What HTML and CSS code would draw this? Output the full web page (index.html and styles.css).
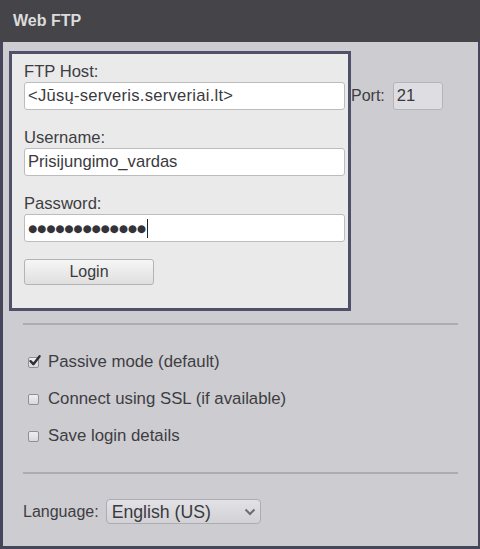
FILE: index.html
```html
<!DOCTYPE html>
<html lang="lt">
<head>
<meta charset="utf-8">
<title>Web FTP</title>
<link rel="stylesheet" href="styles.css">
</head>
<body>
<div class="window">
  <div class="titlebar">Web FTP</div>
  <div class="content">
    <div class="main-row">
      <form class="login-box">
        <div class="field">
          <label class="label" for="host">FTP Host:</label>
          <input class="input host" id="host" type="text" value="&lt;Jūsų-serveris.serveriai.lt&gt;">
        </div>
        <div class="field">
          <label class="label" for="user">Username:</label>
          <input class="input" id="user" type="text" value="Prisijungimo_vardas">
        </div>
        <div class="field">
          <label class="label">Password:</label>
          <div class="input password"><span class="dots">●●●●●●●●●●●●●</span><span class="caret"></span></div>
        </div>
        <button class="btn" type="button">Login</button>
      </form>
      <div class="port">
        <label class="port-label" for="port">Port:</label>
        <input class="port-input" id="port" type="text" value="21">
      </div>
    </div>
    <div class="divider"></div>
    <div class="options">
      <div class="option">
        <span class="check checked"><svg viewBox="0 0 14 14" width="14" height="14"><path d="M2.5 7.2 L5.4 10.2 L11.6 2.2" fill="none" stroke="#2f2f33" stroke-width="2.4" stroke-linecap="round" stroke-linejoin="round"/></svg></span>
        <span class="option-text">Passive mode (default)</span>
      </div>
      <div class="option">
        <span class="check"></span>
        <span class="option-text">Connect using SSL (if available)</span>
      </div>
      <div class="option">
        <span class="check"></span>
        <span class="option-text">Save login details</span>
      </div>
    </div>
    <div class="divider divider-2"></div>
    <div class="lang-row">
      <label class="lang-label" for="lang">Language:</label>
      <div class="select-wrap">
        <select class="select" id="lang"><option>English (US)</option></select>
        <svg class="chevron" viewBox="0 0 12 8" width="12" height="8"><path d="M1.5 1.5 L6 6 L10.5 1.5" fill="none" stroke="#6e6e72" stroke-width="2"/></svg>
      </div>
    </div>
  </div>
</div>
</body>
</html>
```

FILE: styles.css
```css
html, body {
  margin: 0;
  padding: 0;
}
body {
  font-family: "Liberation Sans", Arial, sans-serif;
  color: #3b3b40;
  background: #45454b;
}
.window {
  width: 480px;
  height: 549px;
  display: flex;
  flex-direction: column;
}
.titlebar {
  height: 42px;
  line-height: 42px;
  padding-left: 13px;
  background: #444449;
  color: #dcdcdc;
  font-weight: bold;
  font-size: 16px;
}
.content {
  flex: 1;
  background: #cdccd1;
  border-left: 3px solid #46465a;
  border-right: 2px solid #46465a;
  border-bottom: 3px solid #46465a;
}
.main-row {
  display: flex;
  align-items: flex-start;
  margin: 9px 0 0 6px;
}
.login-box {
  box-sizing: border-box;
  width: 342px;
  margin: 0;
  border: 3px solid #50506a;
  background: #eaeaea;
  padding: 8px 3px 23px 12px;
}
.field {
  margin-bottom: 18px;
}
.field:nth-child(3) {
  margin-bottom: 17px;
}
.label {
  display: block;
  height: 20px;
  line-height: 20px;
  font-size: 16.6px;
  color: #3d3d42;
}
.input {
  display: block;
  box-sizing: border-box;
  width: 321px;
  height: 28px;
  margin: 0;
  padding: 0 3px;
  border: 1px solid #bcbcbc;
  border-radius: 3px;
  background: #ffffff;
  font-family: "Liberation Sans", Arial, sans-serif;
  font-size: 16.6px;
  color: #3a3a3e;
  outline: none;
}
.host {
  letter-spacing: 0.25px;
}
.password {
  display: flex;
  align-items: center;
  padding-left: 3px;
}
.dots {
  font-family: "DejaVu Sans", sans-serif;
  font-size: 10.4px;
  letter-spacing: 0;
  color: #333338;
}
.caret {
  width: 1px;
  height: 19px;
  margin-left: 1px;
  background: #222;
}
.btn {
  display: block;
  box-sizing: border-box;
  width: 130px;
  height: 26px;
  margin: 0;
  padding: 0;
  border: 1px solid #b3b3b3;
  border-radius: 3px;
  background: linear-gradient(#f6f6f6, #dfdfdf);
  font-family: "Liberation Sans", Arial, sans-serif;
  font-size: 16px;
  color: #3a3a3e;
}
.port {
  display: flex;
  align-items: center;
  margin-top: 31px;
  height: 28px;
}
.port-label {
  font-size: 16px;
  color: #3d3d42;
}
.port-input {
  box-sizing: border-box;
  width: 50px;
  height: 28px;
  margin: 0 0 0 8px;
  padding: 0 3px;
  border: 1px solid #b5b5b9;
  border-radius: 3px;
  background: #dedde2;
  font-family: "Liberation Sans", Arial, sans-serif;
  font-size: 16.6px;
  color: #3a3a3e;
  outline: none;
}
.divider {
  height: 2px;
  margin: 12px 20px 0 20px;
  background: #adadb1;
}
.divider-2 {
  margin-top: 26px;
}
.options {
  display: flex;
  flex-direction: column;
  gap: 17px;
  padding: 27px 0 0 25px;
}
.option {
  display: flex;
  align-items: center;
  height: 20px;
}
.check {
  position: relative;
  box-sizing: border-box;
  width: 11px;
  height: 11px;
  margin-right: 9px;
  border: 1px solid #8f8f94;
  border-radius: 2px;
  background: linear-gradient(#efefef, #d9d9dc);
}
.check svg {
  position: absolute;
  left: -1px;
  top: -4px;
}
.option-text {
  font-size: 16.8px;
  color: #3d3d42;
}
.lang-row {
  display: flex;
  align-items: center;
  margin: 25px 0 0 20px;
}
.lang-label {
  font-size: 16px;
  color: #3d3d42;
  margin-right: 7px;
}
.select-wrap {
  position: relative;
  width: 155px;
  height: 25px;
}
.select {
  -webkit-appearance: none;
  appearance: none;
  box-sizing: border-box;
  width: 155px;
  height: 25px;
  margin: 0;
  padding: 0 0 0 5px;
  border: 1px solid #adadb1;
  border-radius: 4px;
  background: linear-gradient(#e2e1e5, #d2d1d5);
  font-family: "Liberation Sans", Arial, sans-serif;
  font-size: 17.7px;
  color: #3a3a3e;
  outline: none;
}
.chevron {
  position: absolute;
  right: 5px;
  top: 9px;
  pointer-events: none;
}
```
